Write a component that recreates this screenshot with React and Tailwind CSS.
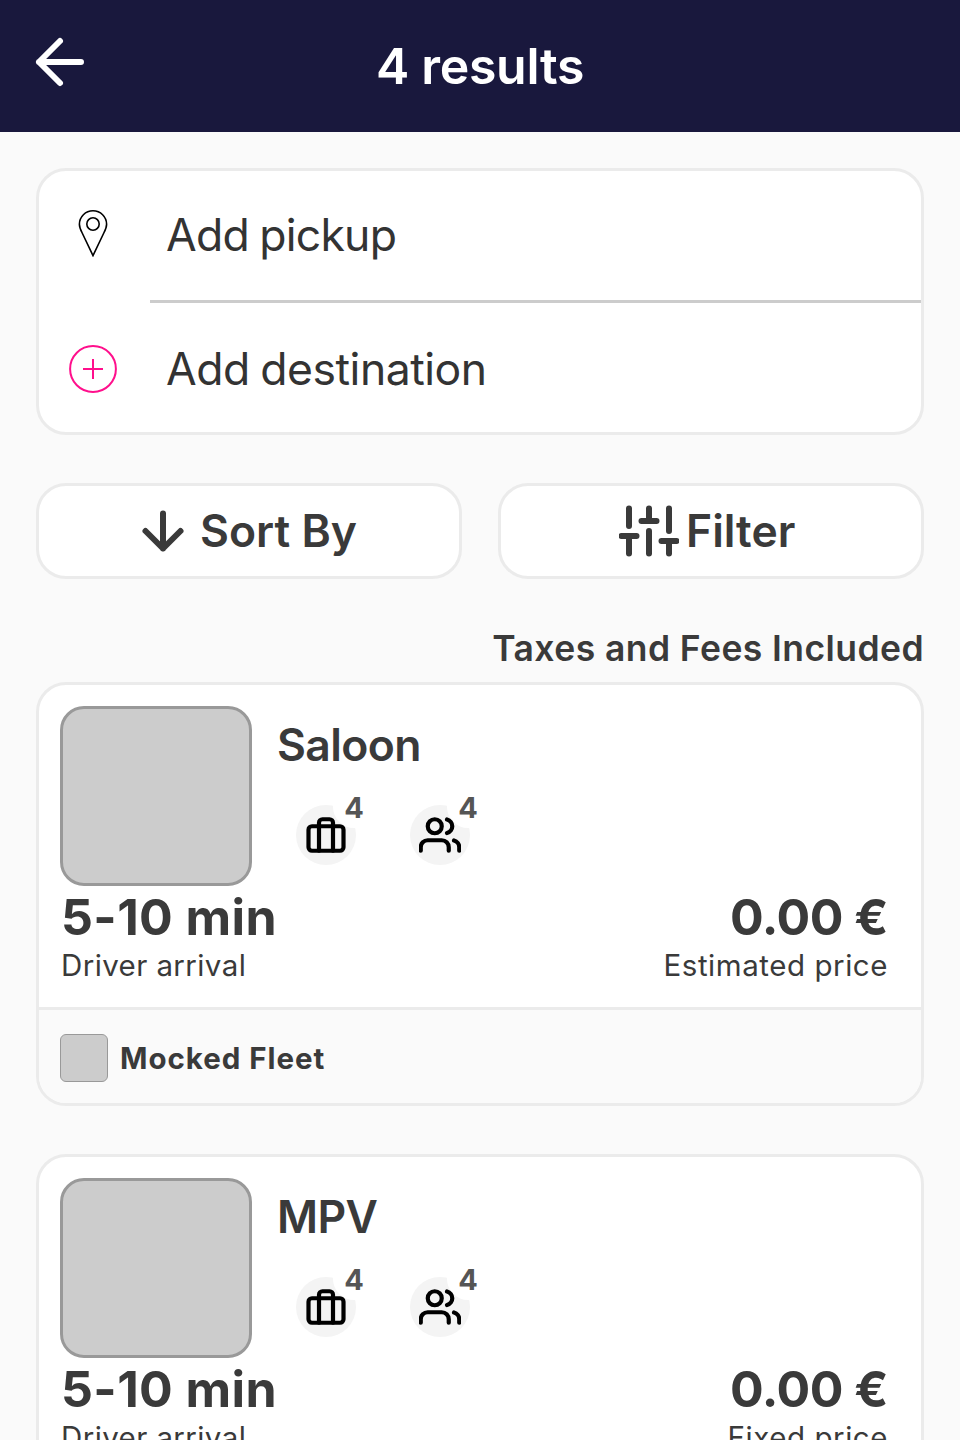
const stroke = {
  fill: 'none',
  stroke: 'currentColor',
  strokeLinecap: 'round',
  strokeLinejoin: 'round',
};

function BackIcon() {
  return (
    <svg viewBox="0 0 24 24" className="size-[72px]" strokeWidth="2" {...stroke}>
      <path d="M19 12H5M12 19l-7-7 7-7" />
    </svg>
  );
}

function ArrowDownIcon() {
  return (
    <svg viewBox="0 0 24 24" className="size-[60px] shrink-0" strokeWidth="2.4" {...stroke}>
      <path d="M12 5v14M19 12l-7 7-7-7" />
    </svg>
  );
}

function SlidersIcon() {
  return (
    <svg viewBox="0 0 24 24" className="size-[60px] shrink-0" strokeWidth="2.4" {...stroke}>
      <path d="M4 21v-7M4 10V3M12 21v-9M12 8V3M20 21v-5M20 12V3M1 14h6M9 8h6M17 16h6" />
    </svg>
  );
}

function PinIcon() {
  return (
    <svg viewBox="0 0 48 48" className="size-12" strokeWidth="1.6" {...stroke} strokeLinejoin="miter">
      <path d="M24 46.6L13.2 24C11.3 20.4 10.4 17.6 10.4 15.2a13.6 13.4 0 0 1 27.2 0C37.6 17.6 36.7 20.4 34.8 24z" />
      <circle cx="24" cy="15" r="6.2" />
    </svg>
  );
}

function PlusCircleIcon() {
  return (
    <svg viewBox="0 0 48 48" className="size-12 text-[#ff0f8c]" strokeWidth="2" {...stroke} strokeLinecap="butt">
      <circle cx="24" cy="24" r="22.9" />
      <path d="M24 14v20M14 24h20" />
    </svg>
  );
}

function CaseIcon() {
  return (
    <svg viewBox="0 0 24 24" className="size-[42px]" strokeWidth="2.4" {...stroke}>
      <rect x="2" y="7" width="20" height="14" rx="2" />
      <path d="M16 21V5a2 2 0 0 0-2-2h-4a2 2 0 0 0-2 2v16" />
    </svg>
  );
}

function UsersIcon() {
  return (
    <svg viewBox="0 0 24 24" className="size-[42px]" strokeWidth="2.4" {...stroke}>
      <path d="M17 21v-2a4 4 0 0 0-4-4H5a4 4 0 0 0-4 4v2" />
      <circle cx="9" cy="7" r="4" />
      <path d="M23 21v-2a4 4 0 0 0-3-3.87M16 3.13a4 4 0 0 1 0 7.75" />
    </svg>
  );
}

function Capacity({ icon, count }) {
  return (
    <div className="relative flex size-[60px] items-center justify-center rounded-full bg-[#f4f4f4] text-black">
      <span className="absolute -top-[19px] left-[37px] flex size-[42px] items-center justify-center rounded-full bg-white pt-0.5 text-[29px] font-bold text-[#555]">
        {count}
      </span>
      <span className="relative">{icon}</span>
    </div>
  );
}

function RideCard({ name, priceLabel }) {
  return (
    <article className="h-[424px] shrink-0 overflow-hidden rounded-[30px] border-[3px] border-[#ebebeb] bg-white">
      <div className="h-[325px] border-b-[3px] border-[#ebebeb] pt-[21px] pr-[33px] pl-[21px]">
        <div className="flex">
          <div className="h-[180px] w-48 rounded-3xl border-[3px] border-[#999] bg-[#ccc]" />
          <div className="ml-[25px]">
            <h2 className="mt-3 text-[44.5px] leading-[54px] font-semibold tracking-[-0.6px]">{name}</h2>
            <div className="mt-[33px] ml-[19px] flex gap-[54px]">
              <Capacity icon={<CaseIcon />} count={4} />
              <Capacity icon={<UsersIcon />} count={4} />
            </div>
          </div>
        </div>
        <div className="flex justify-between pt-px text-[50px] leading-[60px] font-bold">
          <span className="ml-px tracking-[0.4px]">5-10 min</span>
          <span className="tracking-[-0.5px]">0.00 €</span>
        </div>
        <div className="flex justify-between text-[29.5px] leading-9">
          <span className="ml-px tracking-[0.4px]">Driver arrival</span>
          <span className="tracking-[0.55px]">{priceLabel}</span>
        </div>
      </div>
      <div className="flex h-[93px] items-center bg-[#fafafa] pt-[3px] pl-[21px]">
        <div className="size-12 rounded-md border border-[#999] bg-[#ccc]" />
        <span className="ml-3 text-[29.5px] font-bold tracking-[0.95px]">Mocked Fleet</span>
      </div>
    </article>
  );
}

export default function App() {
  return (
    <div className="flex h-[1440px] w-[960px] flex-col overflow-hidden bg-[#fafafa] font-['Inter',sans-serif] text-[#3a3a3a]">
      <header className="grid h-[132px] shrink-0 grid-cols-[1fr_auto_1fr] items-center bg-[#19183d] px-6 text-white">
        <div className="-mt-2">
          <BackIcon />
        </div>
        <h1 className="text-[50px] leading-[60px] font-semibold tracking-[-0.3px]">4 results</h1>
      </header>
      <main className="flex flex-col px-9 pt-9">
        <section className="h-[267px] shrink-0 rounded-[30px] border-[3px] border-[#ebebeb] bg-white text-[44.5px] [word-spacing:-1.5px] text-[#333]">
          <div className="flex h-[132px]">
            <div className="flex w-[111px] justify-center pt-[38px] pr-[3px] text-black">
              <PinIcon />
            </div>
            <div className="flex flex-1 items-center border-b-[3px] border-[#ccc] pl-4">
              <span className="tracking-[-0.75px]">Add pickup</span>
            </div>
          </div>
          <div className="flex h-[129px]">
            <div className="flex w-[111px] justify-center pt-[42px] pr-[3px]">
              <PlusCircleIcon />
            </div>
            <div className="flex flex-1 items-center pt-1 pl-4">
              <span className="tracking-[-0.48px]">Add destination</span>
            </div>
          </div>
        </section>
        <div className="mt-12 flex shrink-0 gap-9 text-[44.5px] font-semibold">
          <button className="flex h-24 w-[426px] items-center rounded-[30px] border-[3px] border-[#ebebeb] bg-white pl-[94px]">
            <ArrowDownIcon />
            <span className="ml-[7px] pt-px">Sort By</span>
          </button>
          <button className="flex h-24 w-[426px] items-center rounded-[30px] border-[3px] border-[#ebebeb] bg-white pl-[118px]">
            <SlidersIcon />
            <span className="ml-[7px] pt-px">Filter</span>
          </button>
        </div>
        <p className="mt-12 h-[55px] shrink-0 text-right text-[35.5px] leading-[44px] font-semibold tracking-[0.42px]">
          Taxes and Fees Included
        </p>
        <div className="flex flex-col gap-12">
          <RideCard name="Saloon" priceLabel="Estimated price" />
          <RideCard name="MPV" priceLabel="Fixed price" />
        </div>
      </main>
    </div>
  );
}
